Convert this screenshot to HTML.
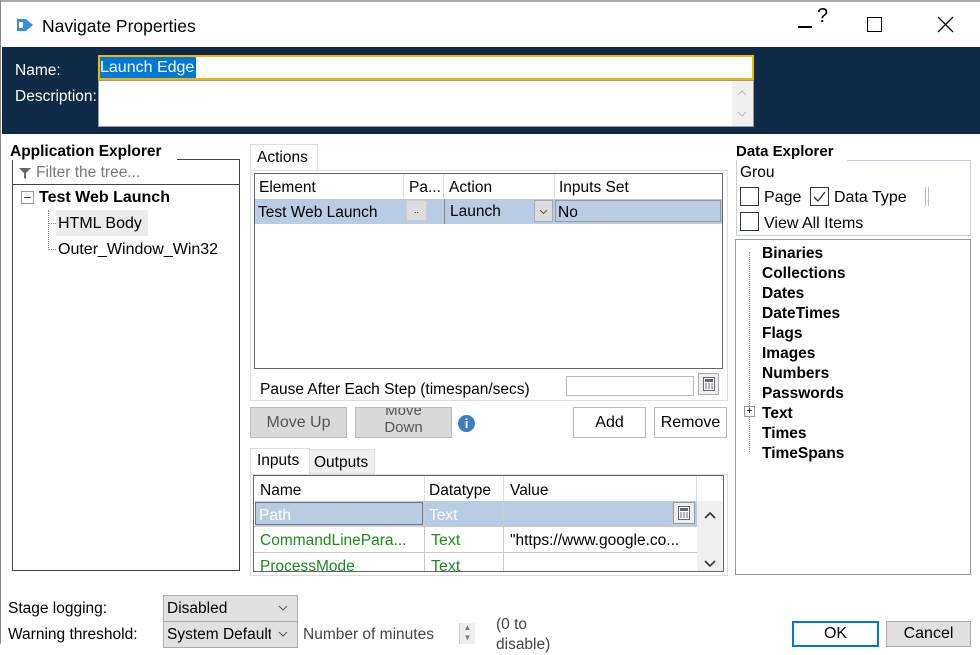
<!DOCTYPE html>
<html><head><meta charset="utf-8"><style>
*{box-sizing:border-box;margin:0;padding:0}
body{width:980px;height:644px;overflow:hidden;background:#fff;font-family:"Liberation Sans",sans-serif;font-size:15.5px;color:#000;position:relative}
.a{position:absolute;white-space:nowrap}
.b{font-weight:bold}
.btn{position:absolute;display:flex;align-items:center;justify-content:center;font-size:16px}
</style></head><body>
<div class="a" style="left:0;top:0;width:980px;height:2px;background:#aaa"></div>
<div class="a" style="left:0;top:0;width:1px;height:644px;background:#888"></div>
<svg class="a" style="left:15px;top:16px" width="20" height="18"><path d="M2 3h9l7 6-7 6H2z" fill="#3a8fd6"/><rect x="4" y="6" width="4" height="6" fill="#fff"/></svg>
<div class="a" style="left:42px;top:16px;font-size:17.5px">Navigate Properties</div>
<div class="a" style="left:798px;top:26px;width:14px;height:1.5px;background:#000"></div>
<div class="a" style="left:817px;top:5px;font-size:20px">?</div>
<div class="a" style="left:867px;top:17px;width:15px;height:15px;border:1.5px solid #000"></div>
<svg class="a" style="left:937px;top:16px" width="17" height="17"><path d="M1 1L16 16M16 1L1 16" stroke="#000" stroke-width="1.3"/></svg>
<div class="a" style="left:2px;top:47px;width:978px;height:87px;background:#0f2a47"></div>
<div class="a" style="left:15px;top:62px;color:#fff">Name:</div>
<div class="a" style="left:15px;top:88px;color:#fff">Description:</div>
<div class="a" style="left:98px;top:55px;width:656px;height:25px;background:#fff;border:2px solid #f2b600"></div>
<div class="a" style="left:100px;top:57px;height:21px;width:96px;background:#0078d7;color:#fff;line-height:21px;font-size:16px">Launch Edge</div>
<div class="a" style="left:98px;top:80px;width:656px;height:47px;background:#fff;border:1px solid #999"></div>
<svg class="a" style="left:732px;top:81px" width="21" height="45"><rect width="21" height="45" fill="#f0f0f0"/><path d="M6 14l4-4 4 4M6 31l4 4 4-4" stroke="#bbb" fill="none"/></svg>

<div class="a b" style="left:10px;top:143px">Application Explorer</div>
<div class="a" style="left:12px;top:160px;width:228px;height:411px;border:1px solid #444;border-top:none"></div>
<div class="a" style="left:177px;top:159px;width:63px;height:1px;background:#444"></div>
<div class="a" style="left:13px;top:184px;width:226px;height:1px;background:#444"></div>
<svg class="a" style="left:18px;top:166px" width="14" height="14"><path d="M1 2h12l-5 5v6l-2-1V7z" fill="#666"/></svg>
<div class="a" style="left:36px;top:164px;color:#777">Filter the tree...</div>
<div class="a" style="left:21px;top:191px;width:13px;height:13px;border:1px solid #999;background:#fff"></div>
<div class="a" style="left:24px;top:197px;width:7px;height:1px;background:#2a4a9a"></div>
<div class="a b" style="left:39px;top:189px;font-size:16px">Test Web Launch</div>
<div class="a" style="left:48px;top:210px;width:1px;height:40px;border-left:1px dotted #888"></div>
<div class="a" style="left:48px;top:223px;width:8px;border-top:1px dotted #888"></div>
<div class="a" style="left:48px;top:249px;width:8px;border-top:1px dotted #888"></div>
<div class="a" style="left:56px;top:210px;width:92px;height:26px;background:#ececec"></div>
<div class="a" style="left:58px;top:215px;font-size:16px">HTML Body</div>
<div class="a" style="left:58px;top:241px;font-size:16px">Outer_Window_Win32</div>

<div class="a" style="left:250px;top:144px;width:68px;height:27px;border:1px solid #ddd;border-bottom:none;background:#fff"></div>
<div class="a" style="left:257px;top:149px">Actions</div>
<div class="a" style="left:250px;top:170px;width:478px;height:231px;border:1px solid #ddd"></div>
<div class="a" style="left:254px;top:173px;width:469px;height:196px;border:1px solid #666"></div>
<div class="a" style="left:403px;top:174px;width:1px;height:24px;background:#ddd"></div>
<div class="a" style="left:443px;top:174px;width:1px;height:24px;background:#ddd"></div>
<div class="a" style="left:554px;top:174px;width:1px;height:24px;background:#ddd"></div>
<div class="a" style="left:259px;top:179px">Element</div>
<div class="a" style="left:409px;top:179px">Pa...</div>
<div class="a" style="left:449px;top:179px">Action</div>
<div class="a" style="left:559px;top:179px">Inputs Set</div>
<div class="a" style="left:255px;top:199px;width:467px;height:25px;background:#b8cce4"></div>
<div class="a" style="left:258px;top:204px">Test Web Launch</div>
<div class="a" style="left:406px;top:200px;width:21px;height:21px;background:#ddd;border:1px solid #ccc;font-size:9px;text-align:center;line-height:18px">..</div>
<div class="a" style="left:444px;top:199px;width:1px;height:25px;background:#888"></div>
<div class="a" style="left:450px;top:203px">Launch</div>
<svg class="a" style="left:534px;top:200px" width="19" height="22"><rect x=".5" y=".5" width="18" height="21" fill="#ddd" stroke="#aaa"/><path d="M6 10l3.5 3.5L13 10" stroke="#555" fill="none"/></svg>
<div class="a" style="left:555px;top:200px;width:166px;height:22px;border:1px solid #999"></div>
<div class="a" style="left:558px;top:204px">No</div>
<div class="a" style="left:260px;top:381px">Pause After Each Step (timespan/secs)</div>
<div class="a" style="left:566px;top:376px;width:128px;height:20px;border:1px solid #bbb"></div>
<div class="a" style="left:698px;top:373px;width:21px;height:22px;border:1px solid #aaa;background:#f0f0f0"></div>
<svg class="a" style="left:703px;top:377px" width="12" height="14"><rect x=".5" y=".5" width="11" height="13" fill="#fff" stroke="#667"/><rect x="2" y="2" width="8" height="3" fill="#667"/><path d="M2 7h2M5 7h2M8 7h2M2 9h2M5 9h2M8 9h2M2 11h2M5 11h2M8 11h2" stroke="#667"/></svg>

<div class="btn" style="left:250px;top:407px;width:97px;height:31px;background:#d9d9d9;border:1px solid #bbb;color:#555">Move Up</div>
<div class="a" style="left:355px;top:407px;width:97px;height:31px;background:#d9d9d9;border:1px solid #bbb;color:#555;line-height:17px;font-size:15px;text-align:center;overflow:hidden;padding-top:0"><div style="margin-top:-6px">Move<br>Down</div></div>
<div class="a" style="left:458px;top:415px;width:17px;height:17px;border-radius:50%;background:#3c7dc4;color:#fff;font-weight:bold;font-size:13px;text-align:center;line-height:17px">i</div>
<div class="btn" style="left:573px;top:407px;width:73px;height:31px;border:1px solid #bbb">Add</div>
<div class="btn" style="left:654px;top:407px;width:73px;height:31px;border:1px solid #bbb">Remove</div>

<div class="a" style="left:250px;top:448px;width:60px;height:27px;border:1px solid #ddd;border-bottom:none;background:#fff"></div>
<div class="a" style="left:257px;top:452px">Inputs</div>
<div class="a" style="left:309px;top:449px;width:66px;height:25px;border:1px solid #ddd;background:#f0f0f0"></div>
<div class="a" style="left:314px;top:454px">Outputs</div>
<div class="a" style="left:250px;top:474px;width:478px;height:102px;border:1px solid #ddd"></div>
<div class="a" style="left:253px;top:475px;width:471px;height:97px;border:1px solid #666;overflow:hidden">
 <div class="a" style="left:170px;top:0;width:1px;height:25px;background:#ddd"></div>
 <div class="a" style="left:249px;top:0;width:1px;height:25px;background:#ddd"></div>
 <div class="a" style="left:442px;top:0;width:1px;height:25px;background:#ddd"></div>
 <div class="a" style="left:6px;top:6px">Name</div>
 <div class="a" style="left:175px;top:6px">Datatype</div>
 <div class="a" style="left:256px;top:6px">Value</div>
 <div class="a" style="left:1px;top:25px;width:442px;height:25px;background:#b8cce4"></div>
 <div class="a" style="left:1px;top:26px;width:168px;height:23px;border:1px solid #777"></div>
 <div class="a" style="left:5px;top:31px;color:#fff">Path</div>
 <div class="a" style="left:175px;top:31px;color:#fff">Text</div>
 <div class="a" style="left:419px;top:26px;width:22px;height:22px;border:1px solid #999;background:#eee"></div>
 <svg class="a" style="left:424px;top:30px" width="12" height="14"><rect x=".5" y=".5" width="11" height="13" fill="#fff" stroke="#667"/><rect x="2" y="2" width="8" height="3" fill="#667"/><path d="M2 7h2M5 7h2M8 7h2M2 9h2M5 9h2M8 9h2M2 11h2M5 11h2M8 11h2" stroke="#667"/></svg>
 <div class="a" style="left:0;top:50px;width:443px;height:1px;background:#ccc"></div>
 <div class="a" style="left:0;top:76px;width:443px;height:1px;background:#ccc"></div>
 <div class="a" style="left:170px;top:25px;width:1px;height:72px;background:#ccc"></div>
 <div class="a" style="left:249px;top:25px;width:1px;height:72px;background:#ccc"></div>
 <div class="a" style="left:6px;top:56px;color:#1d8a1d">CommandLinePara...</div>
 <div class="a" style="left:177px;top:56px;color:#1d8a1d;font-size:16px">Text</div>
 <div class="a" style="left:256px;top:56px">"https://www.google.co...</div>
 <div class="a" style="left:6px;top:82px;color:#1d8a1d">ProcessMode</div>
 <div class="a" style="left:177px;top:82px;color:#1d8a1d;font-size:16px">Text</div>
 <div class="a" style="left:443px;top:25px;width:27px;height:72px;background:#f0f0f0"></div>
 <svg class="a" style="left:449px;top:33px" width="14" height="60"><path d="M2 9l5-5 5 5M2 52l5 5 5-5" stroke="#333" stroke-width="1.6" fill="none"/></svg>
</div>

<div class="a b" style="left:736px;top:143px;font-size:15px">Data Explorer</div>
<div class="a" style="left:736px;top:160px;width:235px;height:76px;border:1px solid #c4d0de;border-top:none"></div>
<div class="a" style="left:847px;top:160px;width:124px;height:1px;background:#c4d0de"></div>
<div class="a" style="left:740px;top:164px">Grou</div>
<div class="a" style="left:740px;top:187px;width:19px;height:19px;border:1px solid #333"></div>
<div class="a" style="left:764px;top:189px;font-size:16px">Page</div>
<div class="a" style="left:810px;top:187px;width:19px;height:19px;border:1px solid #333"></div>
<svg class="a" style="left:812px;top:189px" width="15" height="15"><path d="M2 8l4 4 7-9" stroke="#333" stroke-width="1.3" fill="none"/></svg>
<div class="a" style="left:834px;top:189px;font-size:16px">Data Type</div>
<div class="a" style="left:925px;top:187px;width:4px;height:19px;border-left:1px solid #bbb;border-right:1px solid #bbb"></div>
<div class="a" style="left:740px;top:212px;width:19px;height:19px;border:1px solid #333"></div>
<div class="a" style="left:764px;top:215px;font-size:16px">View All Items</div>
<div class="a" style="left:735px;top:239px;width:236px;height:336px;border:1px solid #999"></div>
<div class="a" style="left:749px;top:252px;height:200px;border-left:1px dotted #999"></div>
<div class="a b" style="left:762px;top:244px;line-height:20px;font-size:15.5px">Binaries<br>Collections<br>Dates<br>DateTimes<br>Flags<br>Images<br>Numbers<br>Passwords<br>Text<br>Times<br>TimeSpans</div>
<div class="a" style="left:744px;top:406px;width:11px;height:11px;border:1px solid #999;background:#fff;font-size:11px;line-height:9px;text-align:center">+</div>

<div class="a" style="left:8px;top:600px">Stage logging:</div>
<div class="a" style="left:8px;top:626px">Warning threshold:</div>
<div class="a" style="left:163px;top:595px;width:135px;height:27px;background:#e1e1e1;border:1px solid #adadad"></div>
<div class="a" style="left:167px;top:600px">Disabled</div>
<svg class="a" style="left:277px;top:603px" width="12" height="10"><path d="M2 3l4 4 4-4" stroke="#555" fill="none"/></svg>
<div class="a" style="left:163px;top:621px;width:135px;height:27px;background:#e1e1e1;border:1px solid #adadad"></div>
<div class="a" style="left:167px;top:626px;width:104px;overflow:hidden">System Default</div>
<svg class="a" style="left:277px;top:629px" width="12" height="10"><path d="M2 3l4 4 4-4" stroke="#555" fill="none"/></svg>
<div class="a" style="left:303px;top:626px;color:#444">Number of minutes</div>
<div class="a" style="left:459px;top:623px;width:16px;height:21px;background:#eee;border-left:1px solid #ccc;font-size:8px;color:#777;text-align:center;line-height:10px">&#9650;<br>&#9660;</div>
<div class="a" style="left:496px;top:615px;color:#444;line-height:20px">(0 to<br>disable)</div>
<div class="btn" style="left:792px;top:621px;width:87px;height:26px;border:2px solid #0078d7">OK</div>
<div class="btn" style="left:886px;top:621px;width:85px;height:26px;border:1px solid #adadad;background:#e1e1e1">Cancel</div>
</body></html>
